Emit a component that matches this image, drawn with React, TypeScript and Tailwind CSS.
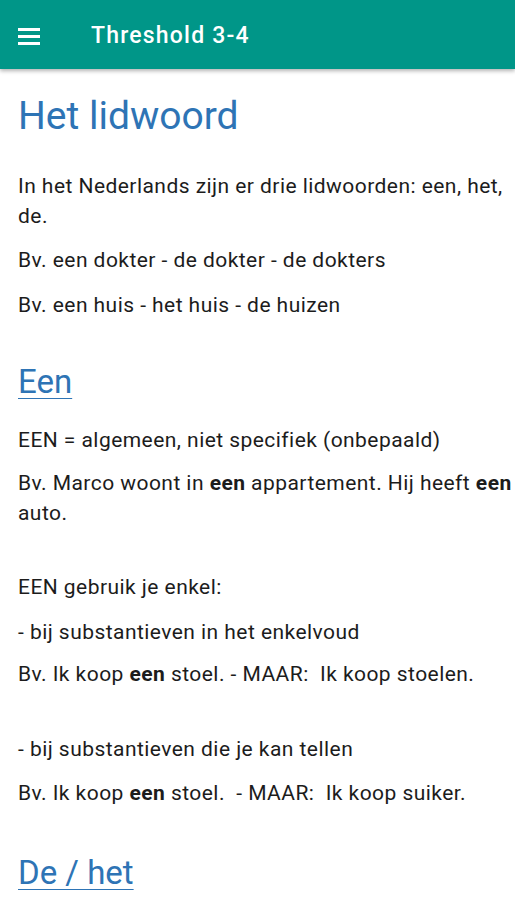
export default function App() {
  return (
    <div className="w-[515px] h-[900px] overflow-hidden bg-white" style={{ fontFamily: "Roboto, 'Noto Sans', sans-serif" }}>
      <header className="relative z-10 h-[69px] pt-[3px] bg-[#009688] flex items-center shadow-[0_2px_4px_rgba(0,0,0,0.3)]">
        <div className="w-[91px] pl-[18px] flex items-center">
          <svg width="22" height="17" viewBox="0 0 22 17">
            <rect x="0" y="0" width="22" height="3" fill="#fff" />
            <rect x="0" y="7" width="22" height="3" fill="#fff" />
            <rect x="0" y="14" width="22" height="3" fill="#fff" />
          </svg>
        </div>
        <span className="text-white text-[23px] font-medium tracking-[1.2px]">Threshold 3-4</span>
      </header>

      <main className="pl-[18px] w-[524px] text-[21px] leading-[30px] tracking-[0.45px] text-[#1c1c1c]">
        <h1 className="text-[39px] leading-[48px] tracking-normal text-[#2e74b5] mt-[23px]">Het lidwoord</h1>
        <p className="mt-[31px]">In het Nederlands zijn er drie lidwoorden: een, het, de.</p>
        <p className="mt-[14px]">Bv. een dokter - de dokter - de dokters</p>
        <p className="mt-[15px]">Bv. een huis - het huis - de huizen</p>

        <h2 className="text-[33px] leading-[40px] tracking-normal text-[#2e74b5] underline underline-offset-[5px] decoration-[1px] mt-[42px]">Een</h2>
        <p className="mt-[23px]">EEN = algemeen, niet specifiek (onbepaald)</p>
        <p className="mt-[13px]">Bv. Marco woont in <b>een</b> appartement. Hij heeft <b>een</b> auto.</p>
        <p className="mt-[44px]">EEN gebruik je enkel:</p>
        <p className="mt-[15px]">- bij substantieven in het enkelvoud</p>
        <p className="mt-[12px]">Bv. Ik koop <b>een</b> stoel. - MAAR:&nbsp; Ik koop stoelen.</p>
        <p className="mt-[45px]">- bij substantieven die je kan tellen</p>
        <p className="mt-[14px]">Bv. Ik koop <b>een</b> stoel.&nbsp; - MAAR:&nbsp; Ik koop suiker.</p>

        <h2 className="text-[33px] leading-[40px] tracking-normal text-[#2e74b5] underline underline-offset-[5px] decoration-[1px] mt-[45px]">De / het</h2>
      </main>
    </div>
  );
}
